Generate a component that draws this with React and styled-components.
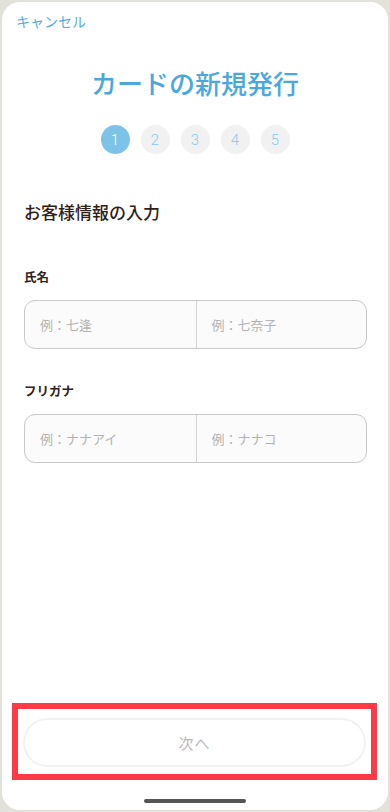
import styled, { createGlobalStyle } from "styled-components";

const GlobalStyle = createGlobalStyle`
  html, body {
    margin: 0;
    padding: 0;
    background: #e2e1da;
  }
  * {
    box-sizing: border-box;
  }
  body {
    font-family: "Noto Sans CJK JP", "Noto Sans", sans-serif;
  }
`;

const steps = [1, 2, 3, 4, 5];

export default function App() {
  return (
    <>
      <GlobalStyle />
      <Screen>
        <TopBar>
          <CancelLink>キャンセル</CancelLink>
        </TopBar>
        <Title>カードの新規発行</Title>
        <Steps>
          {steps.map((n) => (
            <Step key={n} active={n === 1}>
              {n}
            </Step>
          ))}
        </Steps>
        <Form>
          <SectionTitle>お客様情報の入力</SectionTitle>
          <Field>
            <Label>氏名</Label>
            <InputGroup>
              <Input placeholder="例：七逢" />
              <Input placeholder="例：七奈子" />
            </InputGroup>
          </Field>
          <Field>
            <Label>フリガナ</Label>
            <InputGroup>
              <Input placeholder="例：ナナアイ" />
              <Input placeholder="例：ナナコ" />
            </InputGroup>
          </Field>
        </Form>
        <Footer>
          <Highlight>
            <NextButton disabled>次へ</NextButton>
          </Highlight>
          <HomeBar />
        </Footer>
      </Screen>
    </>
  );
}

const Screen = styled.div`
  margin: 2px;
  width: 386px;
  height: 808px;
  background: #fff;
  border-radius: 18px;
  display: flex;
  flex-direction: column;
  overflow: hidden;
`;

const TopBar = styled.div`
  padding: 6px 14px 0;
  height: 34px;
`;

const CancelLink = styled.span`
  font-size: 14px;
  line-height: 20px;
  color: #55ace0;
  cursor: pointer;
`;

const Title = styled.h1`
  margin: 28px 0 0;
  text-align: center;
  font-size: 26px;
  line-height: 38px;
  font-weight: 500;
  color: #4ba8dd;
`;

const Steps = styled.div`
  display: flex;
  justify-content: center;
  gap: 11px;
  margin-top: 23px;
`;

const Step = styled.div`
  width: 29px;
  height: 29px;
  border-radius: 50%;
  display: flex;
  align-items: center;
  justify-content: center;
  font-family: Roboto, "Noto Sans", sans-serif;
  font-size: 15px;
  font-weight: 300;
  background: ${(p) => (p.active ? "#7dc3e8" : "#f1f1f1")};
  color: ${(p) => (p.active ? "#ffffff" : "#8cc8ec")};
`;

const Form = styled.div`
  flex: 1;
  padding: 0 21px 0 22px;
`;

const SectionTitle = styled.h2`
  margin: 46px 0 0;
  font-size: 17px;
  line-height: 24px;
  font-weight: 500;
  color: #2e2019;
`;

const Field = styled.div`
  margin-top: 44px;

  & + & {
    margin-top: 33px;
  }
`;

const Label = styled.div`
  font-size: 12.5px;
  line-height: 18px;
  font-weight: 700;
  color: #2f231d;
`;

const InputGroup = styled.div`
  display: grid;
  grid-template-columns: 1fr 1fr;
  height: 49px;
  margin-top: 14px;
  border: 1px solid #c9c9c9;
  border-radius: 11px;
  background: #fbfbfb;
  overflow: hidden;
`;

const Input = styled.input`
  border: none;
  background: transparent;
  min-width: 0;
  padding: 0 15px;
  font-family: inherit;
  font-size: 13px;
  color: #333;
  outline: none;

  & + & {
    border-left: 1.5px solid #d2d2d2;
  }

  &::placeholder {
    color: #b3b3b3;
  }
`;

const Footer = styled.div`
  display: flex;
  flex-direction: column;
  align-items: center;
  padding-bottom: 7px;
`;

const Highlight = styled.div`
  width: 365px;
  margin-left: -1px;
  padding: 9px 5px 7px;
  border: 6px solid #ff3a47;
`;

const NextButton = styled.button`
  width: 100%;
  height: 49px;
  border-radius: 25px;
  border: 2px solid #f2f2f2;
  background: #fff;
  font-family: inherit;
  font-size: 15px;
  color: #b9b9b9;
  letter-spacing: 1px;
`;

const HomeBar = styled.div`
  width: 102px;
  height: 4px;
  border-radius: 2px;
  background: #555;
  margin-top: 19px;
`;
